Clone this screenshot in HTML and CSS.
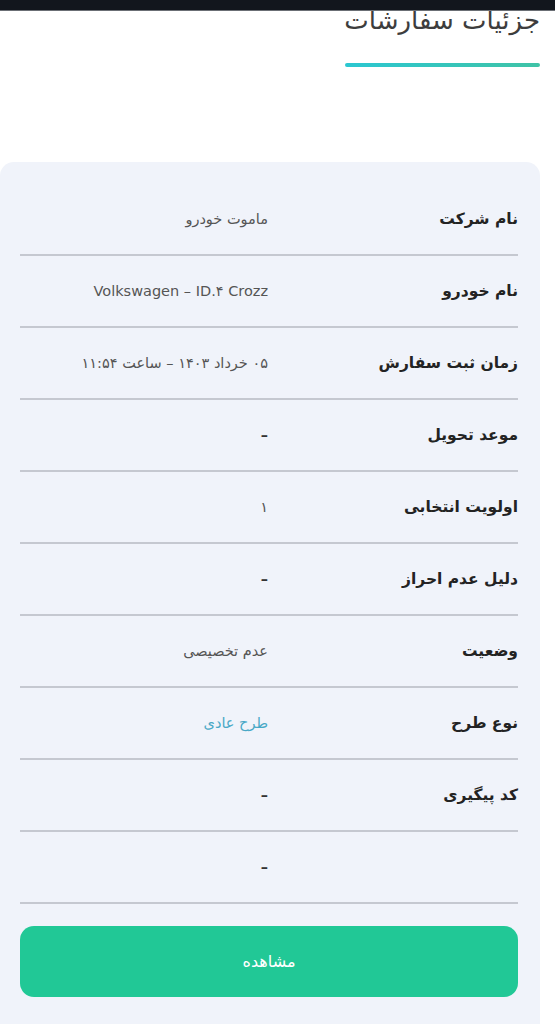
FILE: index.html
```html
<!DOCTYPE html>
<html lang="fa" dir="rtl">
<head>
  <meta charset="UTF-8">
  <meta name="viewport" content="width=device-width, initial-scale=1.0">
  <title>جزئیات سفارشات</title>
  <link rel="stylesheet" href="styles.css">
</head>
<body>
  <div class="status-bar"></div>

  <header class="page-head">
    <h1 class="page-title">جزئیات سفارشات</h1>
    <span class="title-line"></span>
  </header>

  <section class="order-card">
    <div class="order-row">
      <span class="row-label">نام شرکت</span>
      <span class="row-value">ماموت خودرو</span>
    </div>
    <div class="order-row">
      <span class="row-label">نام خودرو</span>
      <span class="row-value">Volkswagen – ID.۴ Crozz</span>
    </div>
    <div class="order-row">
      <span class="row-label">زمان ثبت سفارش</span>
      <span class="row-value">۰۵ خرداد ۱۴۰۳ – ساعت ۱۱:۵۴</span>
    </div>
    <div class="order-row">
      <span class="row-label">موعد تحویل</span>
      <span class="row-value is-empty">–</span>
    </div>
    <div class="order-row">
      <span class="row-label">اولویت انتخابی</span>
      <span class="row-value">۱</span>
    </div>
    <div class="order-row">
      <span class="row-label">دلیل عدم احراز</span>
      <span class="row-value is-empty">–</span>
    </div>
    <div class="order-row">
      <span class="row-label">وضعیت</span>
      <span class="row-value">عدم تخصیصی</span>
    </div>
    <div class="order-row">
      <span class="row-label">نوع طرح</span>
      <span class="row-value is-link">طرح عادی</span>
    </div>
    <div class="order-row">
      <span class="row-label">کد پیگیری</span>
      <span class="row-value is-empty">–</span>
    </div>
    <div class="order-row">
      <span class="row-label"></span>
      <span class="row-value is-empty">–</span>
    </div>

    <button class="view-btn" type="button">مشاهده</button>
  </section>
</body>
</html>
```

FILE: styles.css
```css
body {
  margin: 0;
  padding: 0;
  background: #ffffff;
  font-family: "DejaVu Sans", "Noto Sans", sans-serif;
  color: #222;
  overflow: hidden;
}
.status-bar {
  position: fixed; /* system bar sits over the page */
  top: 0;
  left: 0;
  right: 0;
  height: 10px;
  background: #12161d;
  border-bottom: 1px solid #6b6f75;
  z-index: 2;
}
.page-head {
  padding: 0 15px 0 0;
  display: flex;
  flex-direction: column;
  align-items: flex-start;
}
.page-title {
  margin: 0;
  font-size: 26px;
  font-weight: normal;
  line-height: 40px;
  color: #3d3d3d;
}
.title-line {
  display: block;
  width: 195px;
  height: 4px;
  margin-top: 23px;
  background: linear-gradient(to left, #3fc3a6, #2bc7d1);
  border-radius: 2px;
}
.order-card {
  margin: 95px 15px 0 0;
  padding: 22px 22px 60px 20px;
  background: #f0f3fa;
  border-radius: 14px;
}
.order-row {
  display: flex;
  align-items: center;
  height: 70px;
  border-bottom: 2px solid #c5c8d0;
}
.row-label {
  width: 250px;
  flex-shrink: 0;
  font-size: 15.5px;
  font-weight: bold;
  color: #232323;
}
.row-value {
  font-size: 14.5px;
  color: #555555;
}
.row-value.is-empty {
  color: #333333;
  font-weight: bold;
}
.row-value.is-link {
  color: #48a8c6;
}
.view-btn {
  display: block;
  width: 100%;
  height: 71px;
  margin-top: 22px;
  border: none;
  border-radius: 14px;
  background: #21c896;
  color: #ffffff;
  font-family: inherit;
  font-size: 16px;
  letter-spacing: 1px;
}
```
